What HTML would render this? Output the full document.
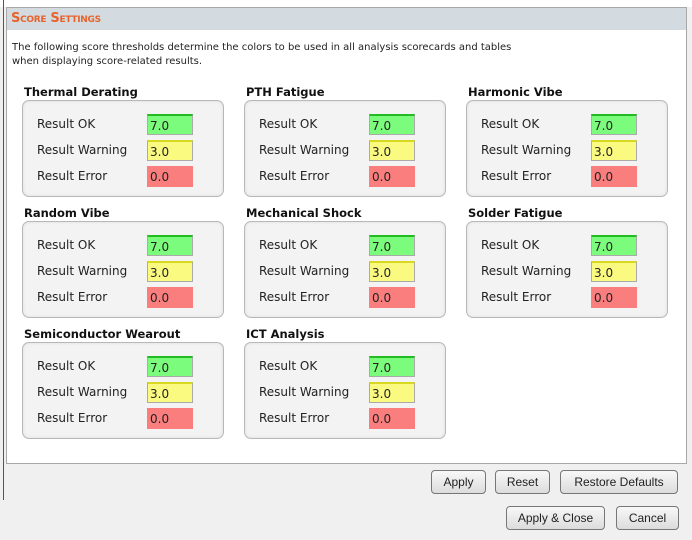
<!DOCTYPE html>
<html><head><style>
body{margin:0;width:692px;height:540px;background:#f0f0f0;font-family:"DejaVu Sans","Liberation Sans",sans-serif;position:relative;overflow:hidden}
.top{position:absolute;left:0;top:0;width:692px;height:7px;background:#fff}
.lb{position:absolute;left:3px;top:0;width:1px;height:500px;background:#555}
.panel{position:absolute;left:6px;top:7px;width:679px;height:455px;background:#fff;border:1px solid #a8a8a8}
.hdr{position:absolute;left:0;top:0;width:679px;height:22px;background:#d3dae0}
.hdr span{position:absolute;left:4px;top:3px;color:#e8632c;font-weight:bold;font-size:13px;font-variant:small-caps;letter-spacing:-0.3px}
.desc{position:absolute;left:5px;top:33px;font-size:10px;line-height:14px;color:#222}
.t{position:absolute;font-size:11.5px;font-weight:bold;color:#111}
.g{position:absolute;width:200px;height:95px;border:1px solid #b8b8b8;border-radius:7px;background:#f3f3f3;box-shadow:inset 0 0 3px #ddd}
.l{position:absolute;left:14px;font-size:12px;color:#222}
.i{position:absolute;left:124px;width:42px;height:19px;border:1px solid #aaa;font-size:12px;line-height:20px;padding-left:2px;box-sizing:content-box;color:#222}
.ok{background:#7cfc7c;border-top:2px solid #22bb22;height:18px}
.w{background:#fafa80;border-top:2px solid #d8d820;height:18px}
.e{background:#fa7e7e;border-color:#fa7e7e}
.b{position:absolute;height:22px;border:1px solid #777;border-radius:4px;background:linear-gradient(#f8f8f8,#dcdcdc);font-size:12px;text-align:center;line-height:22px;color:#222;font-family:"Liberation Sans",sans-serif}
</style></head><body>
<div class="top"></div><div class="lb"></div>
<div class="panel">
<div class="hdr"><span>Score Settings</span></div>
<div class="desc">The following score thresholds determine the colors to be used in all analysis scorecards and tables<br>when displaying score-related results.</div>
</div>
<div id="c"></div>
<script>
var d=[["Thermal Derating",22,100],["PTH Fatigue",244,100],["Harmonic Vibe",466,100],["Random Vibe",22,221],["Mechanical Shock",244,221],["Solder Fatigue",466,221],["Semiconductor Wearout",22,342],["ICT Analysis",244,342]];
var h="";
d.forEach(function(a){
h+='<div class="t" style="left:'+(a[1]+2)+'px;top:'+(a[2]-15)+'px">'+a[0]+'</div>';
h+='<div class="g" style="left:'+a[1]+'px;top:'+a[2]+'px">'+
'<div class="l" style="top:16px">Result OK</div><div class="i ok" style="top:13px">7.0</div>'+
'<div class="l" style="top:42px">Result Warning</div><div class="i w" style="top:39px">3.0</div>'+
'<div class="l" style="top:68px">Result Error</div><div class="i e" style="top:65px">0.0</div></div>';
});
document.getElementById("c").innerHTML=h;
</script>
<div class="b" style="left:431px;top:470px;width:53px">Apply</div>
<div class="b" style="left:495px;top:470px;width:53px">Reset</div>
<div class="b" style="left:560px;top:470px;width:116px">Restore Defaults</div>
<div class="b" style="left:506px;top:506px;width:97px">Apply &amp; Close</div>
<div class="b" style="left:616px;top:506px;width:61px">Cancel</div>
</body></html>
